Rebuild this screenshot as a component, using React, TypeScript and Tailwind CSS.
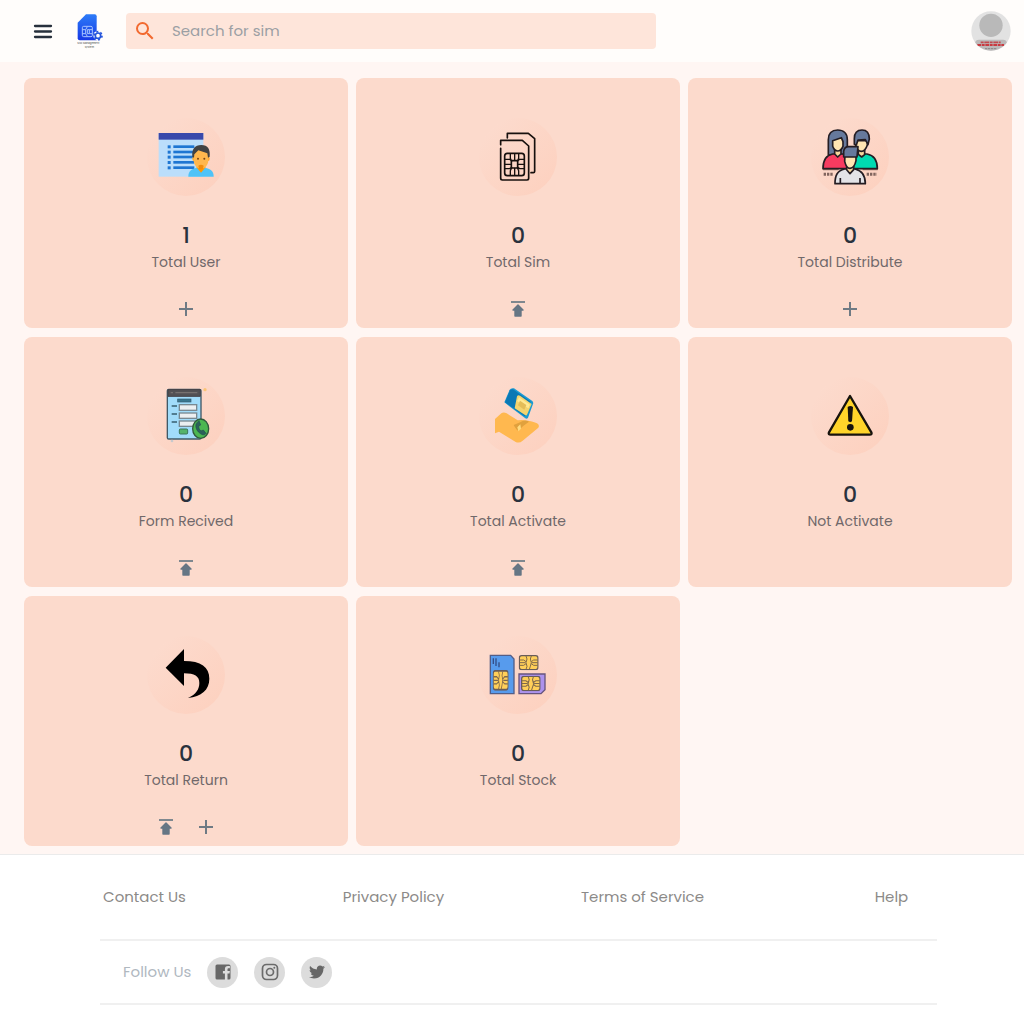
import React from "react";
import { MdAdd, MdSearch } from "react-icons/md";
import { FaTwitter } from "react-icons/fa";

const UploadGlyph = () => (
  <svg viewBox="0 0 24 24" className="size-6" aria-hidden="true">
    <path d="M5 4h14v2h-14z" fill="#7f888f" />
    <path
      d="M12 8l5 5h-2v6H9v-6H7z"
      fill="#667684"
      stroke="#667684"
      strokeWidth="1.4"
      strokeLinejoin="round"
    />
  </svg>
);

const UserArt = () => (
  <svg viewBox="34 26 234 234" className="size-full" aria-hidden="true">
    <rect x="69" y="72" width="134" height="130" fill="#bbdefb" />
    <rect x="69" y="71" width="134" height="20" fill="#3949ab" />
    <g fill="#1e76d2">
      {[108, 124, 139, 155, 171].map((y) => (
        <React.Fragment key={y}>
          <rect x="96" y={y} width="9" height="9" />
          <rect x="113" y={y} width="63" height="8" />
        </React.Fragment>
      ))}
    </g>
    <path d="M158 202c0-18 10-26 38-28 28 2 38 10 38 28z" fill="#4fc3f7" />
    <path d="M181 172l15 18 15-18z" fill="#ff9800" />
    <ellipse cx="175" cy="148" rx="5" ry="7" fill="#ffa726" />
    <ellipse cx="217" cy="148" rx="5" ry="7" fill="#ffa726" />
    <path d="M174 132c0-22 44-22 44 0v20c0 14-9 26-22 26s-22-12-22-26z" fill="#ffb74d" />
    <path d="M170 142c-2-22 7-35 27-35s27 13 25 35l-5 3-2-13-27-9-12 12-1 10z" fill="#424242" />
    <circle cx="187" cy="148" r="3" fill="#784719" />
    <circle cx="206" cy="148" r="3" fill="#784719" />
    <path d="M188 169q8-6 16 0l-2 9q-6 5-12 0z" fill="#f28c0a" />
  </svg>
);

const SimArt = () => (
  <svg viewBox="34 26 234 234" className="size-full" aria-hidden="true">
    <g fill="none" stroke="#17100e" strokeWidth="5" strokeLinecap="round" strokeLinejoin="round">
      <path d="M119 86V72h63l19 16v98q0 4-4 4h-7" />
      <path d="M99 106V93h65l19 17v97q0 5-5 5h-74q-5 0-5-5v-90" />
      <rect x="111" y="132" width="59" height="67" rx="8" />
      <rect x="131" y="154" width="19" height="22" rx="2" />
      <path d="M111 150h15l6 5M170 150h-14l-6 5M111 178h15l6-4M170 178h-14l-6-4M128 133v14l4 8M153 133v14l-4 8M128 198v-14l4-9M153 198v-14l-4-9M141 133v20M141 177v21M112 165h17M152 165h17" strokeWidth="4" />
    </g>
  </svg>
);

const GroupArt = () => (
  <svg viewBox="34 26 234 234" className="size-full" aria-hidden="true">
    <g stroke="#241d23" strokeWidth="5" strokeLinejoin="round">
      <path d="M86 137V91c0-18 10-29 28-29s29 11 29 29v46z" fill="#66799c" />
      <path d="M70 178c0-25 8-40 29-44h30c16 5 23 15 23 44z" fill="#f73b60" />
      <path d="M105 119h19v15l-10 9-9-9z" fill="#f7d79d" />
      <path d="M99 94l26-9 5 12v14q-6 14-16 14t-15-14z" fill="#ffe5b2" />
      <path d="M152 178c0-29 7-39 21-44h29c22 4 31 18 31 44z" fill="#00dab1" />
      <path d="M176 119h19v17l-9 7-10-8z" fill="#f7d79d" />
      <path d="M168 94h35v13q-6 19-18 19-11 0-17-16z" fill="#ffe5b2" />
      <path d="M164 105V88c0-17 9-26 23-26s22 10 22 27l-4 17-8-15-22 1-5 15z" fill="#66799c" />
      <path d="M106 223c0-24 6-39 29-44h31c22 5 31 20 31 44z" fill="#e3e3e7" />
      <path d="M141 166h21v15l-11 12-10-12z" fill="#f7d79d" />
      <path d="M136 137h33v17q-5 23-18 23-11 0-16-21z" fill="#ffe5b2" />
      <path d="M132 143v-17q2-14 15-14h28l-3 31z" fill="#66799c" />
      <path d="M122 206v16M181 206v16" fill="none" />
    </g>
    <path d="M70 181h47M189 181h45" stroke="#5c403e" strokeWidth="3" />
    <path d="M72 195h29M201 195h31" stroke="#81655e" strokeWidth="9" strokeDasharray="7 3" />
  </svg>
);

const FormArt = () => (
  <svg viewBox="34 22 234 234" className="size-full" aria-hidden="true">
    <rect x="95" y="59" width="101" height="149" rx="4" fill="#a1dcfa" stroke="#405967" strokeWidth="4" />
    <path d="M97 60h97v20H97z" fill="#535154" stroke="#454247" strokeWidth="3" />
    <path d="M105 69h7M119 69h66" stroke="#77716f" strokeWidth="4" />
    <rect x="126" y="88" width="40" height="9" fill="#39778f" stroke="#365c70" strokeWidth="2" />
    <path d="M108 109h16M108 133h16M108 157h16" stroke="#517d91" strokeWidth="6" />
    <g fill="#eceff1" stroke="#798992" strokeWidth="4">
      <rect x="131" y="105" width="52" height="17" />
      <rect x="131" y="130" width="52" height="16" />
      <rect x="131" y="154" width="52" height="16" />
    </g>
    <rect x="131" y="178" width="25" height="15" rx="3" fill="#55b36b" stroke="#3c765b" strokeWidth="3" />
    <ellipse cx="195" cy="177" rx="24" ry="29" fill="#4cb751" stroke="#31593d" strokeWidth="4" />
    <path d="M184 159c-7 7-3 23 8 31 7 6 14 8 19 1l-8-10-7 3c-6-5-7-10-7-15l6-3-5-13z" fill="#2c615a" stroke="#234d52" strokeWidth="2" />
    <circle cx="208" cy="60" r="5" fill="#fbc477" />
    <circle cx="109" cy="214" r="4" fill="#c7c9ce" />
  </svg>
);

const HandArt = () => (
  <svg viewBox="34 22 234 234" className="size-full" aria-hidden="true">
    <path d="M110 98l16-38q4-6 13-4l55 38q4 4 2 9l-15 41q-3 5-8 2z" fill="#1b9bd3" />
    <path d="M112 98l15-36q3-4 9-3l53 37-15 41-3 3z" fill="#0b78b5" />
    <path d="M148 80q3-5 9-2l35 25-14 32q-2 4-6 1l-31-20z" fill="#f4d46f" />
    <path d="M154 83l33 22-5 11-34-22z" fill="#ffe992" />
    <path d="M157 93l19 13-6 14-19-13z" fill="#e4bd58" />
    <path d="M82 148l19-17q7-5 16 0l33 21q17-2 28 1 11-1 30 8 9 5 4 13l-47 39q-10 9-21 4l-50-31-12 5z" fill="#ffb84f" />
    <path d="M138 166l21-9q14-8 25-1-19 12-32 27-5 0-14-17z" fill="#e1a13d" />
    <path d="M149 173l9-9 2 13-8 8z" fill="#ffdc81" />
  </svg>
);

const WarningArt = () => (
  <svg viewBox="64 22 234 234" className="size-full" aria-hidden="true">
    <path d="M181 79l-63 109q-3 7 5 7h117q8 0 5-7z" fill="#ffd42a" stroke="#17130d" strokeWidth="7" strokeLinejoin="round" />
    <path d="M174 112q8-6 16 0l-3 43q-5 5-11 0z" fill="#17130d" />
    <circle cx="182" cy="173" r="10" fill="#17130d" />
  </svg>
);

const ReturnArt = () => (
  <svg viewBox="34 18 234 234" className="size-full" aria-hidden="true">
    <path d="M145 57v36c51 0 76 18 76 53 0 34-24 53-64 58 25-11 34-27 34-45 0-20-14-29-46-29v38l-55-55z" fill="#000" />
  </svg>
);

const Chip = ({ x, y, w, h }: { x: number; y: number; w: number; h: number }) => (
  <svg x={x} y={y} width={w} height={h} viewBox="0 0 60 46" preserveAspectRatio="none">
    <rect x="2" y="2" width="56" height="42" rx="7" fill="#ffcf59" stroke="#685c59" strokeWidth="4" />
    <path d="M3 15h12l7 5M3 31h12l7-5M57 15H45l-7 5M57 31H45l-7-5M22 3l3 9q-6 11 0 22l-3 9M38 3l-3 9q6 11 0 22l-3 9M3 23h17M40 23h17" fill="none" stroke="#80694b" strokeWidth="3" />
  </svg>
);

const StockArt = () => (
  <svg viewBox="34 18 234 234" className="size-full" aria-hidden="true">
    <path d="M68 76h61l10 11v104H68z" fill="#579bed" stroke="#535e87" strokeWidth="4" />
    <path d="M77 85v17M85 85v23M94 97v15" stroke="#344e88" strokeWidth="4" />
    <Chip x={75} y={120} w={48} h={62} />
    <Chip x={153} y={75} w={60} h={46} />
    <path d="M154 132h78v47l-12 12h-66z" fill="#ac92ec" stroke="#67547d" strokeWidth="4" />
    <Chip x={160} y={137} w={59} h={47} />
  </svg>
);

type Action = "add" | "upload";

const cards: { label: string; value: number; art: React.ReactNode; actions: Action[] }[] = [
  { label: "Total User", value: 1, art: <UserArt />, actions: ["add"] },
  { label: "Total Sim", value: 0, art: <SimArt />, actions: ["upload"] },
  { label: "Total Distribute", value: 0, art: <GroupArt />, actions: ["add"] },
  { label: "Form Recived", value: 0, art: <FormArt />, actions: ["upload"] },
  { label: "Total Activate", value: 0, art: <HandArt />, actions: ["upload"] },
  { label: "Not Activate", value: 0, art: <WarningArt />, actions: [] },
  { label: "Total Return", value: 0, art: <ReturnArt />, actions: ["upload", "add"] },
  { label: "Total Stock", value: 0, art: <StockArt />, actions: [] },
];

const Logo = () => (
  <svg viewBox="228 40 84 108" className="h-9 w-7" aria-label="SIM Management System" role="img">
    <defs>
      <linearGradient id="simBlue" x1="0" y1="0" x2="0" y2="1">
        <stop offset="0" stopColor="#2d7cf8" />
        <stop offset="1" stopColor="#1638e5" />
      </linearGradient>
    </defs>
    <path d="M258 44h26q6 0 6 6v72h-51q-6 0-6-6V69z" fill="url(#simBlue)" />
    <g fill="none" stroke="#a9c4ff" strokeWidth="3">
      <rect x="247" y="80" width="30" height="31" rx="4" />
      <path d="M247 90h10v12h-10M277 90h-9v12h9M257 90l5-9M257 102l5 8M262 90h6M262 102h6M262 90v12" />
    </g>
    <circle cx="294" cy="108" r="14" fill="#fffdfb" />
    <circle cx="294" cy="108" r="8" fill="none" stroke="#2455dc" strokeWidth="5" />
    <circle cx="294" cy="108" r="12" fill="none" stroke="#2455dc" strokeWidth="5" strokeDasharray="6 6.5" />
    <text x="265" y="134" fontSize="8" textAnchor="middle" fill="#4b4b4b" fontFamily="Inter, sans-serif">SIM Management</text>
    <text x="268" y="144" fontSize="8" textAnchor="middle" fill="#4b4b4b" fontFamily="Inter, sans-serif">System</text>
  </svg>
);

const Avatar = () => (
  <svg viewBox="64 34 120 120" className="size-10" aria-hidden="true">
    <defs>
      <clipPath id="avatarClip">
        <circle cx="124" cy="94" r="59" />
      </clipPath>
    </defs>
    <g clipPath="url(#avatarClip)">
      <rect x="64" y="34" width="120" height="120" fill="#e2e2e2" />
      <circle cx="124" cy="77" r="35" fill="#b9b9b9" />
      <rect x="76" y="120" width="96" height="40" rx="12" fill="#bcb9b9" />
      <path d="M93 128h60" stroke="#c14b4f" strokeWidth="5" strokeDasharray="9 2 14 2" />
      <path d="M83 136h80" stroke="#c93a40" strokeWidth="6" strokeDasharray="12 2 8 2" />
      <path d="M106 147h34" stroke="#8a8585" strokeWidth="3" strokeDasharray="7 2" />
    </g>
  </svg>
);

const social = [
  {
    name: "Facebook",
    icon: (
      <svg viewBox="0 0 24 24" className="size-6" aria-hidden="true">
        <path d="M6 4.5h12a1.5 1.5 0 0 1 1.5 1.5v12a1.5 1.5 0 0 1-1.5 1.5h-1.500v-6h2l.4-2.500h-2.400V9.500c0-.8.400-1.200 1.300-1.200h1.100V6h-2c-2 0-3 1.200-3 3v2h-2v2.500h2v6H6A1.500 1.500 0 0 1 4.500 18V6A1.500 1.500 0 0 1 6 4.500z" fill="#676767" />
      </svg>
    ),
  },
  {
    name: "Instagram",
    icon: (
      <svg viewBox="0 0 24 24" className="size-6" fill="none" stroke="#6b6b6b" strokeWidth="1.7" aria-hidden="true">
        <rect x="4.5" y="4.5" width="15" height="15" rx="4" />
        <circle cx="12" cy="12" r="3.5" />
        <circle cx="16.3" cy="7.7" r="1" fill="#6b6b6b" stroke="none" />
      </svg>
    ),
  },
  { name: "Twitter", icon: <FaTwitter className="size-4 text-[#676767]" /> },
];

export default function App() {
  return (
    <div className="flex min-h-screen flex-col bg-white font-[Poppins,Inter,sans-serif]">
      <header className="flex h-[62px] items-center bg-[#fffdfb] pl-[31px] pr-[13px]">
        <button type="button" aria-label="Open menu" className="mr-[21px]">
          <svg viewBox="0 0 24 24" className="size-6" stroke="#27303c" strokeWidth="2.3" strokeLinecap="round" aria-hidden="true">
            <path d="M4 7h16M4 12.500h16M4 18h16" />
          </svg>
        </button>
        <Logo />
        <div className="ml-[22px] flex h-9 max-w-[530px] flex-1 items-center rounded bg-[#fee5da] pl-[7px]">
          <MdSearch className="size-6 shrink-0 text-[#f26a30]" aria-hidden="true" />
          <input
            type="text"
            aria-label="Search for sim"
            placeholder="Search for sim"
            className="ml-[15px] min-w-0 flex-1 bg-transparent text-[15px] leading-6 text-[#444] outline-none placeholder:text-[#9b9fa4]"
          />
        </div>
        <button type="button" aria-label="Account" className="ml-auto rounded-full">
          <Avatar />
        </button>
      </header>

      <main className="grid grid-cols-3 gap-x-2 gap-y-[9px] border-b border-[#ebebeb] bg-[#fff6f3] pb-2 pl-6 pr-3 pt-4">
        {cards.map((card) => (
          <section key={card.label} className="flex h-[250px] flex-col items-center rounded-lg bg-[#fcdacc] pt-10">
            <div className="size-[78px] rounded-full bg-linear-to-br from-[#fcdccf] to-[#fdd0be]">{card.art}</div>
            <p className="mt-6 text-[22px] font-medium leading-8 text-[#29323d]">{card.value}</p>
            <h2 className="text-sm leading-5 text-[#70686a]">{card.label}</h2>
            <div className="mt-[25px] flex gap-4">
              {card.actions.map((action) => (
                <button
                  key={action}
                  type="button"
                  aria-label={(action === "add" ? "Add: " : "Upload: ") + card.label}
                  className="size-6 text-[#6e7a84]"
                >
                  {action === "add" ? <MdAdd className="size-6" /> : <UploadGlyph />}
                </button>
              ))}
            </div>
          </section>
        ))}
      </main>

      <footer className="bg-white">
        <nav className="grid grid-cols-4 py-[30px] pl-5 pr-2 text-center text-[15px] leading-6 text-[#8c8a88]">
          <a href="#contact">Contact Us</a>
          <a href="#privacy">Privacy Policy</a>
          <a href="#terms">Terms of Service</a>
          <a href="#help">Help</a>
        </nav>
        <div className="ml-[100px] mr-[87px] flex min-h-[66px] items-center gap-4 border-y-2 border-[#f0f0f0] pl-[23px]">
          <span className="text-[15px] leading-6 text-[#b0b8bf]">Follow Us</span>
          {social.map((item) => (
            <a
              key={item.name}
              href={"#" + item.name.toLowerCase()}
              aria-label={item.name}
              className="flex size-[31px] items-center justify-center rounded-full bg-[#dcdcdc]"
            >
              {item.icon}
            </a>
          ))}
        </div>
      </footer>
    </div>
  );
}
